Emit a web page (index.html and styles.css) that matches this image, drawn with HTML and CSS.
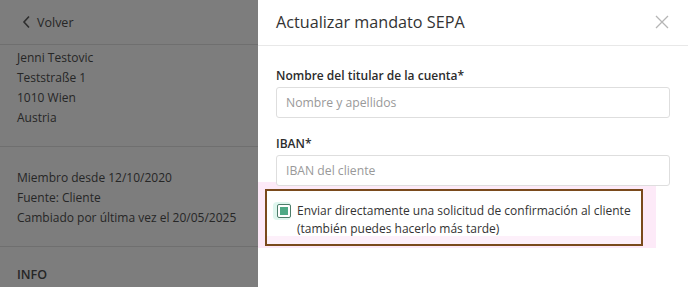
FILE: index.html
```html
<!DOCTYPE html>
<html lang="es">

<head>
    <meta charset="UTF-8">
    <meta name="viewport" content="width=device-width, initial-scale=1.0">
    <title>Actualizar mandato SEPA</title>
    <link rel="stylesheet" href="styles.css">
</head>

<body>
    <!-- Customer page behind the drawer, dimmed -->
    <aside class="backdrop">
        <div class="back-bar">
            <svg class="chevron" width="10" height="14" viewBox="0 0 10 14">
                <path d="M7 1.5 L2 7 L7 12.5" fill="none" stroke="#2e2e2e" stroke-width="1.6" />
            </svg>
            <span>Volver</span>
        </div>
        <div class="info-block address">
            <p>Jenni Testovic</p>
            <p>Teststraße 1</p>
            <p>1010 Wien</p>
            <p>Austria</p>
        </div>
        <div class="info-block meta">
            <p>Miembro desde 12/10/2020</p>
            <p>Fuente: Cliente</p>
            <p>Cambiado por última vez el 20/05/2025</p>
        </div>
        <div class="info-block section">
            <p class="section-title">INFO</p>
        </div>
    </aside>

    <!-- SEPA drawer -->
    <main class="drawer">
        <div class="drawer-header">
            <h1>Actualizar mandato SEPA</h1>
            <svg class="close" width="14" height="14" viewBox="0 0 14 14">
                <path d="M1 1 L13 13 M13 1 L1 13" stroke="#b5b5b5" stroke-width="1.3" />
            </svg>
        </div>

        <form class="drawer-body">
            <label class="field">
                <span class="field-label">Nombre del titular de la cuenta*</span>
                <input type="text" placeholder="Nombre y apellidos">
            </label>
            <label class="field">
                <span class="field-label">IBAN*</span>
                <input type="text" placeholder="IBAN del cliente">
            </label>

            <div class="highlight">
                <div class="check-row">
                    <span class="checkbox"><span class="checkbox-fill"></span></span>
                    <span class="check-text">Enviar directamente una solicitud de confirmación al cliente<br>(también puedes hacerlo más tarde)</span>
                </div>
            </div>
        </form>
    </main>
</body>

</html>
```

FILE: styles.css
```css
* {
    box-sizing: border-box;
}

body {
    margin: 0;
    width: 688px;
    height: 287px;
    overflow: hidden;
    display: flex;
    font-family: "Open Sans", Arial, sans-serif;
    color: #2c2c2c;
    background-color: #fff;
}

p {
    margin: 0;
}

.backdrop {
    width: 258px;
    flex-shrink: 0;
    background-color: #7d7d7d;
    color: #262626;
    font-size: 12px;
}

.back-bar {
    height: 45px;
    display: flex;
    align-items: center;
    gap: 5px;
    padding-left: 22px;
    border-bottom: 1px solid #6f6f6f;
    font-size: 12.5px;
}

.info-block {
    padding: 0 17px;
    border-bottom: 1px solid #6f6f6f;
}

.info-block p {
    line-height: 20px;
}

.address {
    padding-top: 3px;
    padding-bottom: 18px;
}

.meta {
    padding-top: 21px;
    padding-bottom: 18px;
}

.section {
    border-bottom: none;
    padding-top: 18px;
}

.section-title {
    font-weight: 600;
    font-size: 12.5px;
}

.drawer {
    flex: 1;
    background-color: #fff;
}

.drawer-header {
    height: 46px;
    display: flex;
    align-items: center;
    justify-content: space-between;
    padding: 0 19px 2px 18px;
    border-bottom: 1px solid #e8e8e8;
}

.drawer-header h1 {
    margin: 0;
    font-size: 16.2px;
    font-weight: 400;
    color: #333;
}

.drawer-body {
    padding: 23px 18px 0 18px;
}

.field {
    display: block;
    margin-bottom: 19px;
}

.field-label {
    display: block;
    font-size: 12px;
    font-weight: 600;
    line-height: 14px;
    margin-bottom: 4px;
}

.field input {
    position: relative;
    display: block;
    width: 100%;
    height: 31px;
    padding: 0 9px;
    border: 1px solid #dedede;
    border-radius: 3px;
    font-family: inherit;
    font-size: 12.2px;
    color: #333;
}

.field input::placeholder {
    color: #999;
}

/* pink highlight drawn round the checkbox row */
.highlight {
    margin: -23px 0 0 -18px;
    width: 398px;
    padding: 7px 0 2px 0;
    background-color: #fdeaf8;
}

.check-row {
    display: flex;
    align-items: flex-start;
    gap: 6px;
    margin-left: 7px;
    width: 378px;
    padding: 11px 0 6px 10px;
    border: 2px solid #7a4a1c;
    background: linear-gradient(#fff 0 45px, #fdf0fa 45px);
    font-size: 12px;
    line-height: 18px;
}

.checkbox {
    flex-shrink: 0;
    width: 14px;
    height: 14px;
    margin-top: 2px;
    padding: 2px;
    border: 1.5px solid #4d7d6a;
    border-radius: 2px;
    background-color: #fff;
    box-shadow: -2px 0 0 2px #dff6ee;
}

.checkbox-fill {
    display: block;
    width: 100%;
    height: 100%;
    background-color: #4da985;
}

.check-text {
    white-space: nowrap;
    color: #333;
}
```
